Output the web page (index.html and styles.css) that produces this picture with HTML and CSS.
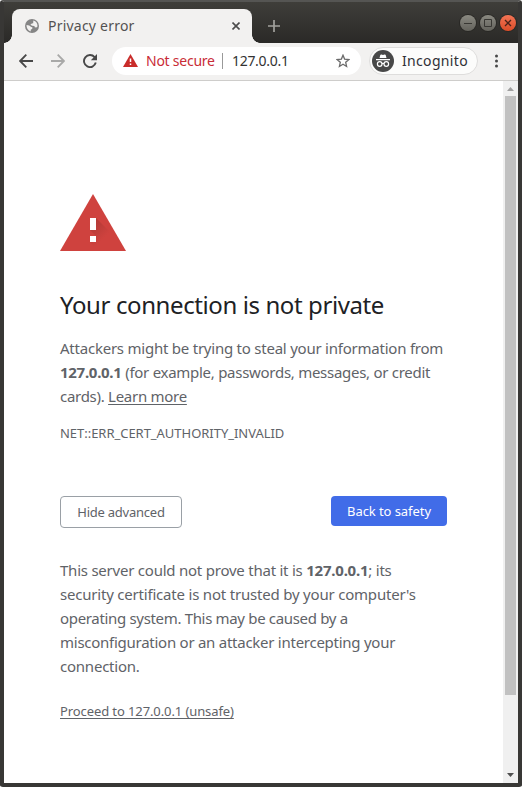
FILE: index.html
```html
<!DOCTYPE html>
<html lang="en">
<head>
<meta charset="utf-8">
<title>Privacy error</title>
<link rel="stylesheet" href="styles.css">
</head>
<body>
<div class="window">
  <header class="strip">
    <div class="tab">
      <svg class="globe" width="14" height="14" viewBox="0 0 14 14"><circle cx="7" cy="7" r="7" fill="#858585"/><path d="M1.5 6 4.2 6.6 6.2 8 7.4 8.3 7.2 10 5.8 10.5 5.7 12.4Q1.4 11 1.5 6ZM8.3 1.5Q12.6 2.7 12.5 7.5L11.3 8.6 9.8 8.3 9.4 7 7.2 6.8 5.4 5.8 6.8 4.5 8.2 4.2Z" fill="#f2f1f0"/></svg>
      <span class="tab-title">Privacy error</span>
      <svg width="8" height="8" viewBox="0 0 8 8"><path d="M.5.5 7.5 7.5M7.5.5.5 7.5" stroke="#4b4b4b" stroke-width="1.6"/></svg>
    </div>
    <div class="strip-right">
      <svg class="plus" width="12" height="12" viewBox="0 0 12 12"><path d="M6 0V12M0 6H12" stroke="#a2a19d" stroke-width="1.7"/></svg>
      <div class="controls">
        <span class="control"><svg width="16" height="16" viewBox="0 0 16 16"><path d="M4 8.5H12" stroke="#383733"/></svg></span>
        <span class="control"><svg width="16" height="16" viewBox="0 0 16 16"><path d="M4.5 4.5H11.5V11.5H4.5Z" fill="none" stroke="#383733"/></svg></span>
        <span class="control close"><svg width="16" height="16" viewBox="0 0 16 16"><path d="M5 5 11 11M11 5 5 11" stroke="#49231a" stroke-width="1.3"/></svg></span>
      </div>
    </div>
  </header>
  <nav class="toolbar">
    <svg class="nav-icon" width="14" height="14" viewBox="0 0 14 14"><path d="M14 7H1.5M7.3.7 1.1 7 7.3 13.3" fill="none" stroke="#484848" stroke-width="1.8"/></svg>
    <svg class="nav-icon" width="14" height="14" viewBox="0 0 14 14"><path d="M0 7H12.5M6.7.7 12.9 7 6.7 13.3" fill="none" stroke="#a9a9a8" stroke-width="1.8"/></svg>
    <svg class="nav-icon" width="14" height="14" viewBox="0 0 14 14"><path d="M11.6 3.2A6 6 0 1 0 12.8 8.6" fill="none" stroke="#484848" stroke-width="1.9"/><path d="M14 0V6.2H7.8Z" fill="#484848"/></svg>
    <div class="omnibox">
      <svg width="15" height="13" viewBox="0 0 15 13"><path d="M7.5 0 15 13H0Z" fill="#c92c2a"/><path d="M7.5 4.5V8M7.5 9.4V11" stroke="#fff" stroke-width="1.5"/></svg>
      <span class="insecure">Not secure</span>
      <span class="divider"></span>
      <span class="url">127.0.0.1</span>
      <svg class="star" width="14" height="14" viewBox="0 0 14 14"><path d="M7 1.2 8.6 5.1 12.9 5.5 9.7 8.3 10.6 12.5 7 10.3 3.4 12.5 4.3 8.3 1.1 5.5 5.4 5.1Z" fill="none" stroke="#6b6b6b" stroke-width="1.3"/></svg>
    </div>
    <div class="incognito">
      <svg width="22" height="22" viewBox="0 0 22 22"><circle cx="11" cy="11" r="11" fill="#484848"/><path d="M7.5 8 8.3 5.1Q8.6 4.3 9.4 4.5L11 4.9 12.6 4.5Q13.4 4.3 13.7 5.1L14.5 8ZM4 9H18V10.2H4Z" fill="#fff"/><g fill="none" stroke="#fff" stroke-width="1.2"><circle cx="7.7" cy="14" r="2.3"/><circle cx="14.3" cy="14" r="2.3"/><path d="M10 13.7Q11 13 12 13.7"/></g></svg>
      <span>Incognito</span>
    </div>
    <svg class="dots" width="3" height="14" viewBox="0 0 3 14" fill="#484848"><circle cx="1.5" cy="2" r="1.5"/><circle cx="1.5" cy="7" r="1.5"/><circle cx="1.5" cy="12" r="1.5"/></svg>
  </nav>
  <div class="viewport">
    <main class="page">
      <svg class="warning" width="66" height="57" viewBox="0 0 66 57"><defs><linearGradient id="shade" gradientUnits="userSpaceOnUse" x1="34" y1="28" x2="47" y2="41"><stop offset="0" stop-color="#b33a36"/><stop offset="1" stop-color="#cf423e"/></linearGradient></defs><path d="M33 0 66 57H0Z" fill="#cf423e"/><path d="M36 24 52 40 48 54 30 36ZM36 42 51 57H39L30 48Z" fill="url(#shade)"/><path d="M30 24H36V36H30ZM30 42H36V48H30Z" fill="#fff"/></svg>
      <h1>Your connection is not private</h1>
      <p class="copy"><span class="l1">Attackers might be trying to steal your information from</span><br><span class="l2"><b>127.0.0.1</b> (for example, passwords, messages, or credit</span><br><span class="l3">cards). <a>Learn more</a></span></p>
      <p class="code">NET::ERR_CERT_AUTHORITY_INVALID</p>
      <div class="actions">
        <button class="secondary">Hide advanced</button>
        <button class="primary">Back to safety</button>
      </div>
      <p class="copy"><span class="l4">This server could not prove that it is <b>127.0.0.1</b>; its</span><br><span class="l5">security certificate is not trusted by your computer's</span><br><span class="l6">operating system. This may be caused by a</span><br><span class="l7">misconfiguration or an attacker intercepting your</span><br><span class="l8">connection.</span></p>
      <p class="proceed"><a>Proceed to 127.0.0.1 (unsafe)</a></p>
    </main>
    <div class="scrollbar">
      <svg width="15" height="15" viewBox="0 0 15 15"><path d="M4 10 7.5 6 11 10Z" fill="#a0a0a0"/></svg>
      <div class="thumb"></div>
      <svg class="down" width="15" height="15" viewBox="0 0 15 15"><path d="M4 5 7.5 9 11 5Z" fill="#505050"/></svg>
    </div>
  </div>
</div>
</body>
</html>
```
FILE: styles.css
```css
* { box-sizing: border-box; }
body { margin: 0; background: #fff; font-family: "Noto Sans", sans-serif; }
svg { display: block; flex: none; }
.window { width: 522px; height: 787px; border: 4px solid #383735; border-top: 2px solid #555553; border-radius: 3px; background: #f2f1f0; display: flex; flex-direction: column; overflow: hidden; }
.strip { height: 41px; flex: none; display: flex; background: linear-gradient(#3f3e3a, #2a2927); }
.tab { width: 240px; height: 34px; margin: 7px 0 0 8px; padding: 0 12px 0 13px; border-radius: 8px 8px 0 0; background: #f2f1f0; display: flex; align-items: center; position: relative; }
.tab::before, .tab::after { content: ""; position: absolute; bottom: 0; width: 8px; height: 8px; }
.tab::before { left: -8px; background: radial-gradient(circle at 0 0, transparent 7.5px, #f2f1f0 8px); }
.tab::after { right: -8px; background: radial-gradient(circle at 100% 0, transparent 7.5px, #f2f1f0 8px); }
.tab-title { margin-left: 9px; margin-right: auto; font-size: 14px; line-height: 20px; letter-spacing: .22px; color: #525252; white-space: nowrap; }
.strip-right { flex: 1; display: flex; justify-content: space-between; padding: 13px 2px 0 16px; }
.plus { margin-top: 5px; }
.controls { display: flex; gap: 4px; }
.control { width: 16px; height: 16px; border-radius: 50%; background: linear-gradient(#8a8981, #63625c); box-shadow: 0 0 0 1px #292825; }
.close { background: linear-gradient(#f37455, #da4c28); }
.toolbar { height: 38px; flex: none; display: flex; align-items: center; padding: 0 20px 1px 15px; border-bottom: 1px solid #cecdcb; }
.nav-icon { margin-right: 18px; }
.omnibox { width: 249px; height: 28px; margin-left: -3px; border-radius: 14px; background: #fff; display: flex; align-items: center; padding: 0 11px 1px; font-size: 14px; white-space: nowrap; }
.insecure { width: 69px; margin-left: 8px; letter-spacing: -.25px; color: #c92c37; }
.divider { width: 1px; height: 16px; background: #999; margin: 0 9px 0 7px; }
.url { color: #333; letter-spacing: -.3px; }
.star { margin-left: auto; }
.incognito { width: 109px; height: 28px; margin-left: 8px; border: 1px solid #dedddc; border-radius: 14px; background: #fcfcfb; display: flex; align-items: center; padding: 0 0 1px 2px; font-size: 14px; letter-spacing: .33px; color: #303036; }
.incognito span { margin-left: 8px; }
.dots { margin-left: auto; }
.viewport { flex: 1; display: flex; background: #fff; min-height: 0; }
.page { flex: 1; min-width: 0; padding: 113px 56px 0; color: #5f6368; }
h1 { margin: 38px 0 0; font-size: 24px; line-height: 32px; font-weight: 400; letter-spacing: -.4px; color: #202124; white-space: nowrap; }
p { margin: 0; white-space: nowrap; }
.copy { margin-top: 15px; font-size: 15px; line-height: 24px; }
.l1, .l4, .l8 { letter-spacing: -.23px; }
.l2, .l3 { letter-spacing: -.28px; }
.l5 { letter-spacing: -.2px; }
.l6 { letter-spacing: -.33px; }
.l7 { letter-spacing: -.26px; }
a { text-decoration: underline; text-underline-offset: 2px; }
.code { margin-top: 16px; font-size: 13px; line-height: 19px; letter-spacing: -.03px; }
.actions { display: flex; justify-content: space-between; align-items: flex-start; margin: 53px 0 30px; }
button { font-family: inherit; font-size: 13px; border-radius: 4px; padding: 0; white-space: nowrap; }
.secondary { width: 122px; height: 32px; border: 1px solid #9aa0a6; background: #fff; color: #5f6368; letter-spacing: -.23px; }
.primary { width: 116px; height: 30px; border: 0; background: #416ce8; color: #fff; letter-spacing: -.07px; }
.proceed { margin-top: 23px; font-size: 13px; line-height: 20px; letter-spacing: -.1px; }
.scrollbar { width: 15px; flex: none; background: #f0f0f0; display: flex; flex-direction: column; }
.thumb { height: 599px; margin: 0 2px; background: #c1c1c1; }
.down { margin-top: auto; }
```
